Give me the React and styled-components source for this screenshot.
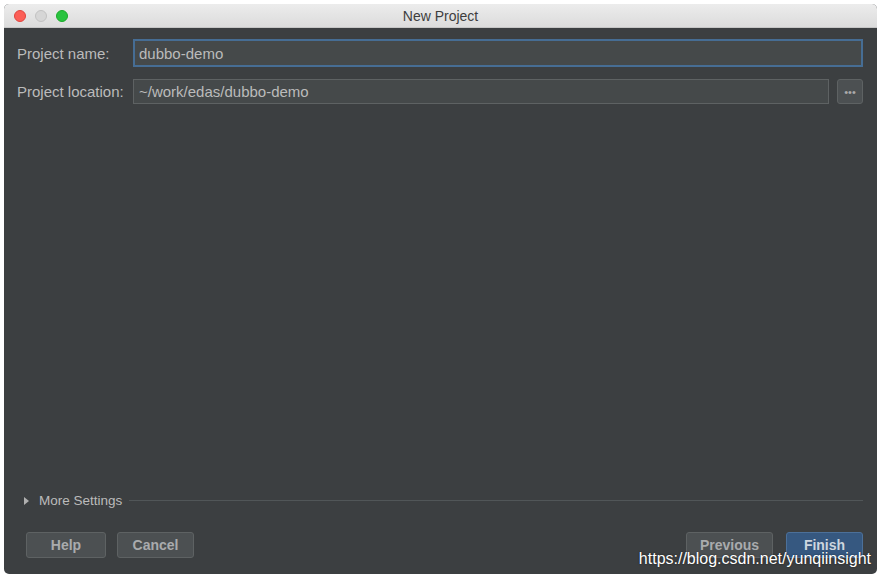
import React from 'react';
import styled, { createGlobalStyle } from 'styled-components';

const GlobalStyle = createGlobalStyle`
  html, body {
    margin: 0;
    padding: 0;
    background: #ffffff;
    font-family: "Liberation Sans", Arial, sans-serif;
  }
`;

const Page = styled.div`
  width: 881px;
  height: 577px;
  padding: 4px 4px 3px 4px;
  box-sizing: border-box;
`;

const Window = styled.div`
  height: 100%;
  display: flex;
  flex-direction: column;
  background: #3c3f41;
  border-radius: 5px;
  overflow: hidden;
  position: relative;
`;

const TitleBar = styled.div`
  height: 23px;
  flex-shrink: 0;
  display: flex;
  align-items: center;
  position: relative;
  padding-left: 10px;
  gap: 9px;
  background: linear-gradient(#ececec, #dcdcdc);
  border-bottom: 1px solid #c6c6c6;
`;

const Light = styled.span`
  width: 12px;
  height: 12px;
  border-radius: 50%;
  background: ${(p) => p.color};
  border: 1px solid ${(p) => p.edge};
  box-sizing: border-box;
`;

const Title = styled.div`
  position: absolute;
  left: 0;
  right: 0;
  text-align: center;
  font-size: 14px;
  color: #3e3e3e;
`;

const Body = styled.div`
  flex: 1;
  display: flex;
  flex-direction: column;
  padding: 11px 14px 16px 13px;
`;

const Row = styled.div`
  display: flex;
  align-items: center;
  height: ${(p) => p.h}px;
  margin-bottom: ${(p) => p.mb || 0}px;
`;

const Label = styled.div`
  width: 116px;
  font-size: 15px;
  color: #bbbbbb;
  white-space: nowrap;
`;

const Input = styled.div`
  flex: 1;
  height: 100%;
  box-sizing: border-box;
  display: flex;
  align-items: center;
  padding-left: ${(p) => (p.focused ? 4 : 5)}px;
  background: #45494a;
  border: ${(p) => (p.focused ? '2px solid #466d94' : '1px solid #5e6263')};
  font-size: 15px;
  color: #bbbbbb;
`;

const Dots = styled.div`
  width: 26px;
  height: 100%;
  margin-left: 8px;
  box-sizing: border-box;
  border: 1px solid #5e6263;
  border-radius: 3px;
  background: #4c5052;
  color: #aaaaaa;
  font-size: 11px;
  display: flex;
  align-items: flex-end;
  justify-content: center;
  padding-bottom: 5px;
  line-height: 1;
`;

const Spacer = styled.div`
  flex: 1;
`;

const MoreRow = styled.div`
  display: flex;
  align-items: center;
  gap: 10px;
  padding-left: 7px;
  margin-bottom: 24px;
`;

const Arrow = styled.span`
  width: 0;
  height: 0;
  border-top: 4px solid transparent;
  border-bottom: 4px solid transparent;
  border-left: 5px solid #b0b0b0;
`;

const MoreText = styled.span`
  font-size: 13.5px;
  color: #bbbbbb;
  margin-right: -3px;
`;

const Line = styled.div`
  flex: 1;
  height: 1px;
  background: #515658;
`;

const Buttons = styled.div`
  display: flex;
  align-items: center;
  padding-left: 9px;
  gap: 11px;
`;

const Button = styled.div`
  width: ${(p) => p.w}px;
  height: 26px;
  box-sizing: border-box;
  border-radius: 3px;
  display: flex;
  align-items: center;
  justify-content: center;
  font-size: 14px;
  font-weight: bold;
  color: ${(p) => (p.primary ? '#cdd6df' : '#a9abad')};
  background: ${(p) => (p.primary ? '#365880' : '#4c5052')};
  border: 1px solid ${(p) => (p.primary ? '#4c7099' : '#5e6263')};
  margin-left: ${(p) => p.ml || 0}px;
`;

const Watermark = styled.div`
  position: absolute;
  right: 6px;
  bottom: 6px;
  font-family: "Liberation Sans", Arial, sans-serif;
  font-size: 16px;
  color: #ffffff;
  text-shadow: 0 0 2px rgba(0, 0, 0, 0.6);
`;

export default function App() {
  return (
    <>
      <GlobalStyle />
      <Page>
        <Window>
          <TitleBar>
            <Light color="#fc5f57" edge="#e0443e" />
            <Light color="#d6d6d6" edge="#c2c2c2" />
            <Light color="#29c33f" edge="#1aab29" />
            <Title>New Project</Title>
          </TitleBar>
          <Body>
            <Row h={28} mb={12}>
              <Label>Project name:</Label>
              <Input focused>dubbo-demo</Input>
            </Row>
            <Row h={25}>
              <Label>Project location:</Label>
              <Input>~/work/edas/dubbo-demo</Input>
              <Dots>•••</Dots>
            </Row>
            <Spacer />
            <MoreRow>
              <Arrow />
              <MoreText>More Settings</MoreText>
              <Line />
            </MoreRow>
            <Buttons>
              <Button w={80}>Help</Button>
              <Button w={77}>Cancel</Button>
              <Spacer />
              <Button w={87}>Previous</Button>
              <Button w={77} primary ml={2}>Finish</Button>
            </Buttons>
          </Body>
          <Watermark>https://blog.csdn.net/yunqiinsight</Watermark>
        </Window>
      </Page>
    </>
  );
}
